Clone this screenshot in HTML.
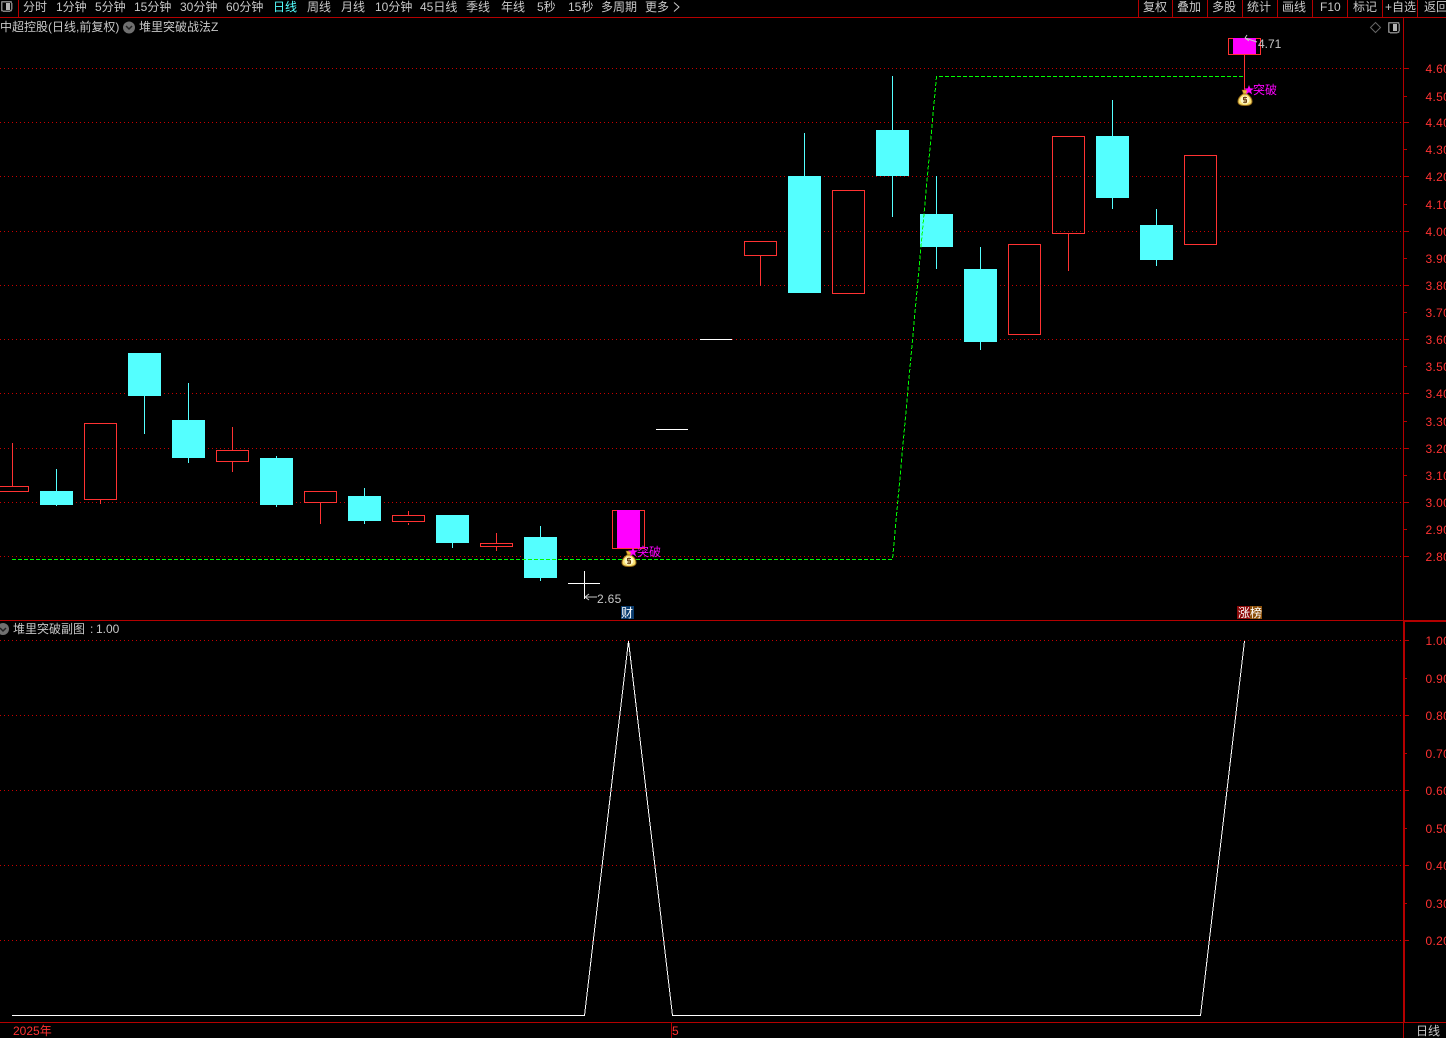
<!DOCTYPE html>
<html lang="zh"><head><meta charset="utf-8"><title>K</title>
<style>
html,body{margin:0;padding:0;background:#000;width:1446px;height:1038px;overflow:hidden}
svg{display:block;position:absolute;left:0;top:0}
text{font-family:"WenQuanYi Zen Hei","Liberation Sans","Noto Sans CJK SC",sans-serif;font-size:12px;fill:#c8c8c8}
.a text{fill:#ff3232;font-family:"Liberation Sans",sans-serif;font-size:12px}
</style></head><body>
<svg width="1446" height="1038" viewBox="0 0 1446 1038" shape-rendering="crispEdges">
<defs>
<g id="bag" shape-rendering="auto">
<path d="M-3 -8H3L1.500 -4H-1.500Z" fill="#e8b838" stroke="#8a5a10" stroke-width=".6"/>
<path d="M-2 -4H2C5 -2 7 1 7 3.500C7 6.500 4.500 7.500 0 7.500C-4.500 7.500 -7 6.500 -7 3.500C-7 1 -5 -2 -2 -4Z" fill="#f8e070" stroke="#9a6c18" stroke-width="1"/>
<ellipse cx="0" cy="2" rx="4.500" ry="4" fill="#fff8c8"/>
<path d="M2 -.500H-1.500V1.800H1.500V4.300H-2M0 -1.500V5.300" fill="none" stroke="#6a4010" stroke-width="1"/>
</g>
<polygon id="star" points="0,-5 1.300,-1.600 5,-1.500 2,0.800 3.100,4.400 0,2.300 -3.100,4.400 -2,0.800 -5,-1.500 -1.300,-1.600" fill="#ff00ff" shape-rendering="auto"/>
</defs>
<!-- grid -->
<g stroke="#c80000" stroke-width="1" stroke-dasharray="1 3" fill="none">
<path d="M0 68.500H1403M0 122.500H1403M0 176.500H1403M0 231.500H1403M0 285.500H1403M0 339.500H1403M0 393.500H1403M0 448.500H1403M0 502.500H1403M0 556.500H1403"/>
<path d="M0 640.500H1403M0 715.500H1403M0 790.500H1403M0 865.500H1403M0 940.500H1403"/>
</g>
<!-- panel lines -->
<g stroke="#b40000" stroke-width="1" fill="none">
<path d="M0 17.500H1446"/>
<path d="M18.500 0V17"/>
<path d="M1138.500 0V17M1172.500 0V17M1207.500 0V17M1242.500 0V17M1277.500 0V17M1312.500 0V17M1347.500 0V17M1382.500 0V17M1417.500 0V17"/>
<path d="M1403.500 18V620"/>
<path d="M0 620.500H1446"/>
<path d="M0 1022.500H1446"/>
<path d="M1403.500 1022V1038"/>
<path d="M671.500 1022V1038"/>
</g>
<rect x="1404" y="620" width="42" height="2" fill="#b40000"/>
<rect x="1403" y="620" width="2" height="402" fill="#b40000"/>
<!-- ticks -->
<g stroke="#b40000" fill="none">
<path d="M1404 68.500H1409M1404 96.500H1407M1404 122.500H1409M1404 149.500H1407M1404 176.500H1409M1404 204.500H1407M1404 231.500H1409M1404 258.500H1407M1404 285.500H1409M1404 312.500H1407M1404 339.500H1409M1404 366.500H1407M1404 393.500H1409M1404 421.500H1407M1404 448.500H1409M1404 475.500H1407M1404 502.500H1409M1404 529.500H1407M1404 556.500H1409"/>
<path d="M1405 640.500H1409M1405 678.500H1407M1405 715.500H1409M1405 753.500H1407M1405 790.500H1409M1405 828.500H1407M1405 865.500H1409M1405 903.500H1407M1405 940.500H1409"/>
</g>
<!-- candles -->
<g fill="none" stroke="#ff3232" stroke-width="1">
<path d="M12.500 443V486"/>
<rect x="-4.500" y="486.500" width="33" height="5"/>
<rect x="84.500" y="423.500" width="32" height="76"/><path d="M100.500 500V504"/>
<path d="M232.500 427V450M232.500 462V472"/><rect x="216.500" y="450.500" width="32" height="11"/>
<rect x="304.500" y="491.500" width="32" height="11"/><path d="M320.500 503V524"/>
<path d="M408.500 511V515M408.500 523V525"/><rect x="392.500" y="515.500" width="32" height="6"/>
<path d="M496.500 533V543M496.500 547V551"/><rect x="480.500" y="543.500" width="32" height="3"/>
<rect x="612.500" y="510.500" width="32" height="38"/>
<rect x="744.500" y="241.500" width="32" height="14"/><path d="M760.500 256V286"/>
<rect x="832.500" y="190.500" width="32" height="103"/>
<rect x="1008.500" y="244.500" width="32" height="90"/>
<rect x="1052.500" y="136.500" width="32" height="97"/><path d="M1068.500 234V271"/>
<rect x="1184.500" y="155.500" width="32" height="89"/>
<rect x="1228.500" y="38.500" width="32" height="16"/><path d="M1244.500 55V97"/>
</g>
<g fill="#ff00ff"><rect x="617" y="510" width="23" height="38"/><rect x="1233" y="38" width="23" height="16"/></g>
<g stroke="#54ffff" stroke-width="1" fill="none">
<path d="M56.500 469V506M144.500 396V434M188.500 383V463M276.500 456V507M364.500 488V524M452.500 543V548M540.500 526V581M804.500 133V176M892.500 76V217M936.500 176V269M980.500 247V350M1112.500 100V209M1156.500 209V266"/>
</g>
<g fill="#54ffff">
<rect x="40" y="491" width="33" height="14"/>
<rect x="128" y="353" width="33" height="43"/>
<rect x="172" y="420" width="33" height="38"/>
<rect x="260" y="458" width="33" height="47"/>
<rect x="348" y="496" width="33" height="25"/>
<rect x="436" y="515" width="33" height="28"/>
<rect x="524" y="537" width="33" height="41"/>
<rect x="788" y="176" width="33" height="117"/>
<rect x="876" y="130" width="33" height="46"/>
<rect x="920" y="214" width="33" height="33"/>
<rect x="964" y="269" width="33" height="73"/>
<rect x="1096" y="136" width="33" height="62"/>
<rect x="1140" y="225" width="33" height="35"/>
</g>
<g stroke="#fff" fill="none">
<path d="M568 583.500H600M584.500 571V599M656 429.500H688M700 339.500H732"/>
</g>
<!-- green line -->
<path d="M12 559.500H892.500L936.500 76.500H1244" fill="none" stroke="#00ff00" stroke-width="1" stroke-dasharray="4 2"/>
<!-- sub line -->
<path d="M12 1015.500H584.500L628.500 641L672.500 1015.500H1200.500L1244.500 641" fill="none" stroke="#fff" stroke-width="1"/>
<!-- price arrows -->
<g stroke="#c8c8c8" fill="none" shape-rendering="auto">
<path d="M597 597H585M585 597L589 594M585 597L589 600"/>
<path d="M1257 42L1245 38M1245 38L1247 35M1245 38L1249 41"/>
</g>
<text x="597" y="603" style="font-family:'Liberation Sans',sans-serif;letter-spacing:.3px">2.65</text>
<text x="1258" y="48" style="font-family:'Liberation Sans',sans-serif">4.71</text>
<!-- signals -->
<text x="637" y="556" style="fill:#ff00ff">突破</text>
<text x="1253" y="94" style="fill:#ff00ff">突破</text>
<use href="#bag" x="629" y="559"/>
<use href="#bag" x="1245" y="98"/>
<use href="#star" x="633" y="552"/>
<use href="#star" x="1249" y="90"/>
<!-- badges -->
<rect x="621" y="606" width="13" height="13" fill="#0a3c6e"/>
<text x="621" y="617" style="fill:#fff">财</text>
<rect x="1237" y="606" width="13" height="13" fill="#8c0a0a"/>
<rect x="1250" y="606" width="12" height="13" fill="#8c500a"/>
<text x="1238" y="617" style="fill:#fff">涨榜</text>
<!-- top icons -->
<g fill="none" stroke="#808080" stroke-width="1.500">
<rect x="1.500" y="1.500" width="10" height="9.500" rx="1.500"/>
<rect x="1388.500" y="22.500" width="10.500" height="10" rx="1.500"/>
</g>
<rect x="6" y="3" width="4" height="7" fill="#b4b4b4"/>
<rect x="1393" y="24" width="4" height="7" fill="#b4b4b4"/>
<path d="M1375.500 22.500L1380.500 27.500L1375.500 32.500L1370.500 27.500Z" fill="none" stroke="#666" shape-rendering="auto"/>
<!-- toolbar -->
<g>
<text x="23" y="11">分时</text><text x="56" y="11">1分钟</text><text x="95" y="11">5分钟</text><text x="134" y="11">15分钟</text><text x="180" y="11">30分钟</text><text x="226" y="11">60分钟</text>
<text x="273" y="11" style="fill:#54ffff">日线</text>
<text x="307" y="11">周线</text><text x="341" y="11">月线</text><text x="375" y="11">10分钟</text><text x="420" y="11">45日线</text><text x="466" y="11">季线</text><text x="501" y="11">年线</text><text x="537" y="11">5秒</text><text x="568" y="11">15秒</text><text x="601" y="11">多周期</text><text x="645" y="11">更多</text>
<path d="M674 2.500L679 7L674 11.500" fill="none" stroke="#c8c8c8" shape-rendering="auto"/>
<text x="1143" y="11">复权</text><text x="1177" y="11">叠加</text><text x="1212" y="11">多股</text><text x="1247" y="11">统计</text><text x="1282" y="11">画线</text><text x="1320" y="11">F10</text><text x="1353" y="11">标记</text><text x="1385" y="11">+自选</text><text x="1424" y="11">返回</text>
</g>
<!-- titles -->
<text x="0" y="31">中超控股(日线,前复权)</text>
<circle cx="129" cy="27.500" r="6" fill="#707070" shape-rendering="auto"/>
<path d="M126 26L129 29L132 26" fill="none" stroke="#222" stroke-width="1.500" shape-rendering="auto"/>
<text x="139" y="31">堆里突破战法Z</text>
<circle cx="3" cy="629" r="6" fill="#707070" shape-rendering="auto"/>
<path d="M0 628L3 631L6 628" fill="none" stroke="#222" stroke-width="1.500" shape-rendering="auto"/>
<text x="13" y="633">堆里突破副图</text><text x="90" y="633">:</text><text x="96" y="633">1.00</text>
<!-- axis labels -->
<g class="a" style="letter-spacing:.3px">
<text x="1425.500" y="73">4.60</text><text x="1425.500" y="101">4.50</text><text x="1425.500" y="127">4.40</text><text x="1425.500" y="154">4.30</text><text x="1425.500" y="181">4.20</text><text x="1425.500" y="209">4.10</text><text x="1425.500" y="236">4.00</text><text x="1425.500" y="263">3.90</text><text x="1425.500" y="290">3.80</text><text x="1425.500" y="317">3.70</text><text x="1425.500" y="344">3.60</text><text x="1425.500" y="371">3.50</text><text x="1425.500" y="398">3.40</text><text x="1425.500" y="426">3.30</text><text x="1425.500" y="453">3.20</text><text x="1425.500" y="480">3.10</text><text x="1425.500" y="507">3.00</text><text x="1425.500" y="534">2.90</text><text x="1425.500" y="561">2.80</text>
<text x="1425.500" y="645">1.00</text><text x="1425.500" y="683">0.90</text><text x="1425.500" y="720">0.80</text><text x="1425.500" y="758">0.70</text><text x="1425.500" y="795">0.60</text><text x="1425.500" y="833">0.50</text><text x="1425.500" y="870">0.40</text><text x="1425.500" y="908">0.30</text><text x="1425.500" y="945">0.20</text>
</g>
<text x="13" y="1035" style="fill:#ff3232">2025年</text>
<text x="672" y="1035" style="fill:#ff3232">5</text>
<text x="1416" y="1035">日线</text>
</svg>
</body></html>
